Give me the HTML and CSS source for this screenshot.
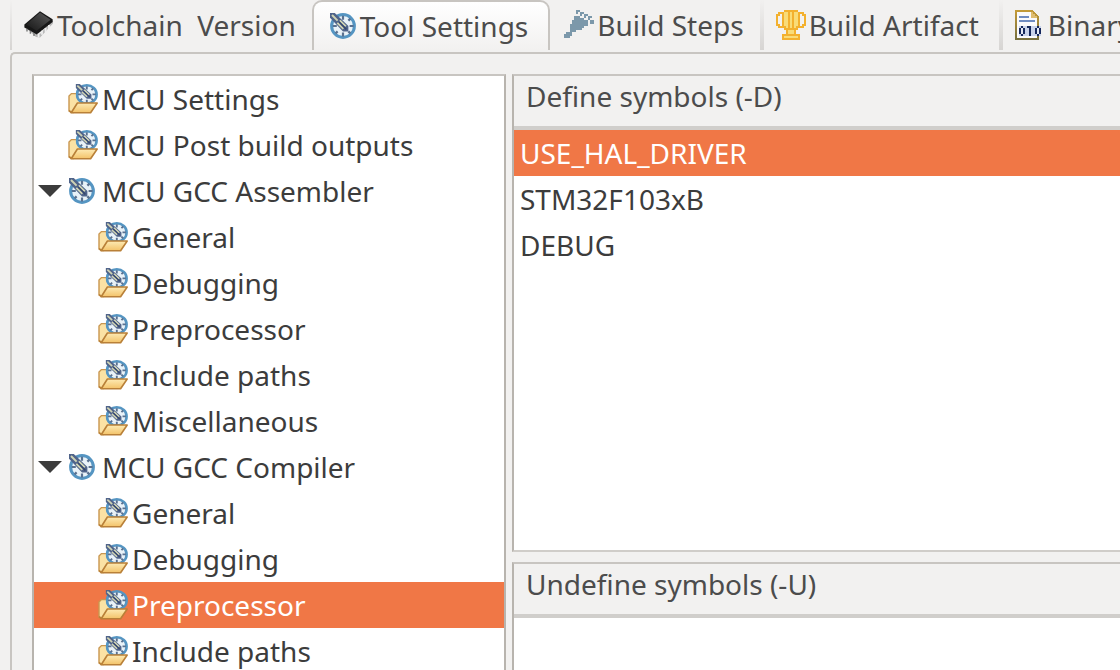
FILE: index.html
```html
<!DOCTYPE html>
<html lang="en">
<head>
    <meta charset="UTF-8">
    <meta name="viewport" content="width=device-width, initial-scale=1.0">
    <title>Tool Settings</title>
    <link rel="stylesheet" href="styles.css">
</head>
<body>

    <!-- shared icons -->
    <svg class="icon-defs" width="0" height="0" aria-hidden="true">
        <linearGradient id="chipTop" x1="0" y1="1" x2="1" y2="0">
            <stop offset="0" stop-color="#151515"/>
            <stop offset="1" stop-color="#5a5a5a"/>
        </linearGradient>
        <linearGradient id="docEdge" x1="0" y1="0" x2="0" y2="1">
            <stop offset="0" stop-color="#c29a38"/>
            <stop offset="1" stop-color="#77703f"/>
        </linearGradient>
        <linearGradient id="folderFront" x1="0" y1="0" x2="0" y2="1">
            <stop offset="0" stop-color="#fdebb5"/>
            <stop offset="1" stop-color="#f3c268"/>
        </linearGradient>
        <symbol id="dial" viewBox="0 0 13 13">
            <circle cx="6.5" cy="6.5" r="5.7" fill="#e9f2f8" stroke="#5595c2" stroke-width="1.5"/>
            <path d="M6.5 1.4v2M6.5 9.8v2M1.4 6.5h2M9.8 6.5h2M9.2 3.8l1-1M2.8 10.2l1-1M9.2 9.2l1 1" stroke="#5a7190" stroke-width="1.1"/>
            <path d="M0 0h2.4l6.8 6.5v2.7H6.5L0 2.4z" fill="#50648a"/>
            <path d="M1 1l2.8 2.8M4.9 3.7l3 3M3.7 4.9l3 3" stroke="#cfd3b4" stroke-width="1"/>
            <path d="M4.4 4.4l3.8 3.8" stroke="#34466f" stroke-width=".8"/>
        </symbol>
        <symbol id="folder" viewBox="0 0 15 15">
            <path d="M.5 13.4V6L1.7 4.8h2.6L5.5 6.5h6.8v4H5L2.5 14.3z" fill="#fbe2a4" stroke="#c99750" stroke-width=".7"/>
            <svg x="3.8" y="0" width="11.2" height="10.4" viewBox="0 0 13 13" preserveAspectRatio="none"><use href="#dial" width="13" height="13"/></svg>
            <path d="M1.6 14.4l3.1-4.9h9.9l-3.3 4.9z" fill="url(#folderFront)" stroke="#b98038" stroke-width=".8" stroke-linejoin="round"/>
            <path d="M.5 13.3l1.3 1.1" stroke="#b98038" stroke-width=".8"/>
        </symbol>
    </svg>

    <div class="tab-bar" role="tablist">
        <button class="tab" role="tab">
            <svg class="icon" viewBox="0 0 15 15">
                <path d="M1 9l5 4.5 2 .3 6.5-7V5L8 12z" fill="#b9b9b9"/>
                <path d="M.2 7.3L8 .6l6.3 4v1.4L6.4 12.2 .2 8.8z" fill="#171717"/>
                <path d="M1.2 7.2L8 1.2l5.3 3.7-7 5.5z" fill="url(#chipTop)"/>
                <path d="M7.3 11.8v2M9 10.4v2M10.8 9v2M12.5 7.5v2" stroke="#eee" stroke-width=".9"/>
                <path d="M1.5 9.4v1.4M3.2 10.4v1.5M5 11.5V13" stroke="#777" stroke-width=".7"/>
            </svg>
            <span>Toolchain  Version</span>
        </button>
        <button class="tab active" role="tab" aria-selected="true">
            <svg class="icon dial" viewBox="0 0 13 13"><use href="#dial"/></svg>
            <span>Tool Settings</span>
        </button>
        <button class="tab" role="tab">
            <svg class="icon" viewBox="0 0 15 15" shape-rendering="crispEdges">
                <path d="M6 0h2v1H7v1H6zM8 1h2v1H9v1H8zM10 2h2v1h-1v1h-1zM12 3h2v1h-1v1h-1zM13 5h2v2h-2z" fill="#7c98aa"/>
                <path d="M5 3h3v1h2v1h2v3h-2v1H9v1H6v1H3V7h1V5h1zM1 11h3v2H3v1H0v-2h1z" fill="#7c98aa"/>
            </svg>
            <span>Build Steps</span>
        </button>
        <button class="tab" role="tab">
            <svg class="icon" viewBox="0 0 15 15" shape-rendering="crispEdges">
                <path d="M4 0h7v1h3v1h1v6h-1v1h-3v1h-1v2h2v3H3v-3h2v-2H4V9H1V8H0V2h1V1h3z" fill="#f3b12f"/>
                <path d="M1 3h1V2h1v6H2V7H1zM12 2h1v1h1v4h-1v1h-1z" fill="#f2f1f0"/>
                <path d="M4 1h2v8H5V8H4zM7 1h1v8H7zM9 1h2v7h-1v1H9zM6 10h3v2H6zM4 13h7v1H4z" fill="#f9dc78"/>
            </svg>
            <span>Build Artifact</span>
        </button>
        <button class="tab" role="tab">
            <svg class="icon" viewBox="0 0 15 15" shape-rendering="crispEdges">
                <path d="M.5.5h8l3 3v11H.5z" fill="#fafafc" stroke="url(#docEdge)"/>
                <path d="M8 1h1v1h1v1h1v1H8z" fill="#dfbd70"/>
                <path d="M2 3h5v1H2zM2 5h8v1H2z" fill="#6f8cc2"/>
                <path d="M2 8h11v5H2z" fill="#c9d3ea"/>
                <path d="M3 8h1v1h1v3H4v1H3v-1H2V9h1zM7 8h1v5H7V9H6V8zM11 8h1v1h1v3h-1v1h-1v-1h-1V9h1z" fill="#16285c"/>
                <path d="M3 9h1v3H3zM11 9h1v3h-1z" fill="#e5eaf5"/>
            </svg>
            <span>Binary Parsers</span>
        </button>
    </div>

    <main class="page">
        <div class="tree" role="tree">
            <button class="row" role="treeitem"><svg class="icon"><use href="#folder"/></svg>MCU Settings</button>
            <button class="row" role="treeitem"><svg class="icon"><use href="#folder"/></svg>MCU Post build outputs</button>
            <button class="row parent" role="treeitem" aria-expanded="true"><i class="arrow"></i><svg class="icon dial"><use href="#dial"/></svg>MCU GCC Assembler</button>
            <div class="children" role="group">
                <button class="row" role="treeitem"><svg class="icon"><use href="#folder"/></svg>General</button>
                <button class="row" role="treeitem"><svg class="icon"><use href="#folder"/></svg>Debugging</button>
                <button class="row" role="treeitem"><svg class="icon"><use href="#folder"/></svg>Preprocessor</button>
                <button class="row" role="treeitem"><svg class="icon"><use href="#folder"/></svg>Include paths</button>
                <button class="row" role="treeitem"><svg class="icon"><use href="#folder"/></svg>Miscellaneous</button>
            </div>
            <button class="row parent" role="treeitem" aria-expanded="true"><i class="arrow"></i><svg class="icon dial"><use href="#dial"/></svg>MCU GCC Compiler</button>
            <div class="children" role="group">
                <button class="row" role="treeitem"><svg class="icon"><use href="#folder"/></svg>General</button>
                <button class="row" role="treeitem"><svg class="icon"><use href="#folder"/></svg>Debugging</button>
                <button class="row selected" role="treeitem" aria-selected="true"><svg class="icon"><use href="#folder"/></svg>Preprocessor</button>
                <button class="row" role="treeitem"><svg class="icon"><use href="#folder"/></svg>Include paths</button>
            </div>
        </div>

        <div class="options">
            <section class="panel">
                <h2 id="defineTitle">Define symbols (-D)</h2>
                <div class="symbols" role="listbox" aria-labelledby="defineTitle">
                    <button class="symbol selected" role="option" aria-selected="true">USE_HAL_DRIVER</button>
                    <button class="symbol" role="option">STM32F103xB</button>
                    <button class="symbol" role="option">DEBUG</button>
                </div>
            </section>
            <section class="panel">
                <h2 id="undefineTitle">Undefine symbols (-U)</h2>
                <div class="symbols" role="listbox" aria-labelledby="undefineTitle"></div>
            </section>
        </div>
    </main>

</body>
</html>
```
FILE: styles.css
```css
:root {
    --bg: #f2f1f0;
    --line: #c8c5c1;
    --edge: #b8b4ae;
    --text: #3c3c3c;
    --label: #4c4c4c;
    --accent: #f07746;
}

* {
    box-sizing: border-box;
}

body {
    margin: 0;
    height: 100vh;
    overflow: hidden;
    background: var(--bg);
    color: var(--text);
    font-family: "Noto Sans", "Open Sans", sans-serif;
    font-size: 28px;
    line-height: 46px;
}

button {
    border: 0;
    padding: 0;
    background: none;
    color: inherit;
    font: inherit;
    text-align: left;
    white-space: pre;
}

.icon-defs {
    position: absolute;
}

.icon {
    flex: none;
    width: 30px;
    height: 30px;
}

.icon.dial {
    width: 26px;
    height: 26px;
}

.tab-bar {
    display: flex;
    height: 50px;
    margin-left: 10px;
}

.tab {
    display: flex;
    flex: none;
    align-items: center;
    gap: 3px;
    padding: 0 16px 0 12px;
    border-left: 2px solid;
    border-image: linear-gradient(#f2f1f0, #d6d4d2) 1;
    color: var(--label);
}

.tab.active {
    gap: 4px;
    padding: 0 20px 0 16px;
    border: 2px solid var(--line);
    border-bottom: 0;
    border-image: none;
    border-radius: 10px 10px 0 0;
    background: linear-gradient(#ffffff, #f2f1f0);
}

.tab.active ~ .tab {
    padding: 0 20px 0 12px;
    border-left-width: 4px;
}

.tab.active + .tab {
    padding: 0 16px 0 14px;
    border-left: 0;
}

.page {
    display: grid;
    grid-template-columns: 474px 1fr;
    gap: 6px;
    margin: 2px 0 0 10px;
    padding: 20px 0 0 20px;
    border: solid var(--line);
    border-width: 2px 0 0 2px;
    border-radius: 5px 0 0 0;
}

.tree {
    border: 2px solid var(--edge);
    border-top-color: var(--line);
    background: #ffffff;
}

.row {
    display: flex;
    align-items: center;
    gap: 4px;
    width: 100%;
    padding-left: 34px;
}

.row.parent {
    gap: 7px;
    padding-left: 4px;
}

.children .row {
    padding-left: 64px;
}

.arrow {
    border: solid transparent;
    border-width: 12px 12px 0;
    border-top-color: var(--text);
}

.selected {
    background: var(--accent);
    color: #ffffff;
}

.panel {
    margin-bottom: 10px;
    border: solid var(--edge);
    border-width: 2px 0 2px 2px;
    border-top-color: var(--line);
    border-bottom-color: #d0cdc9;
}

.panel h2 {
    margin: 0;
    padding: 0 12px 10px;
    border-bottom: 4px solid #d0cecb;
    color: var(--label);
    font-size: 28px;
    font-weight: normal;
    line-height: 40px;
}

.symbols {
    min-height: 420px;
    background: #ffffff;
}

.symbol {
    display: block;
    width: 100%;
    padding-left: 6px;
}
```
